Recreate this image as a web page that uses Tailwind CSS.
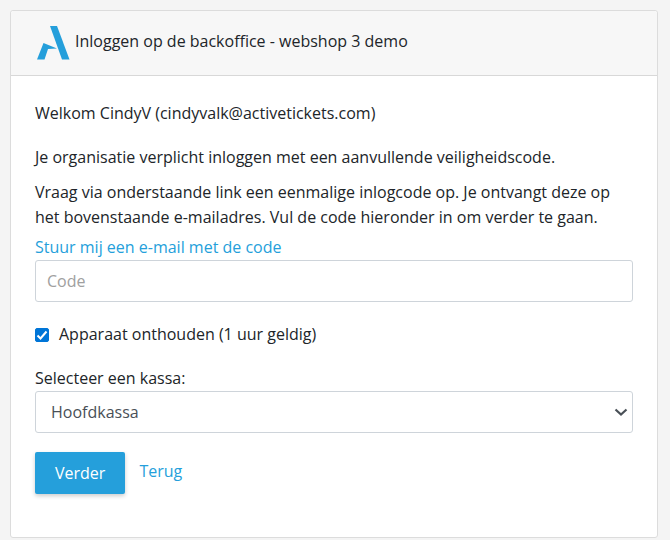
<!DOCTYPE html>
<html lang="nl">
<head>
    <meta charset="UTF-8">
    <meta name="viewport" content="width=device-width, initial-scale=1.0">
    <title>Inloggen op de backoffice</title>
    <script src="https://cdn.jsdelivr.net/npm/@tailwindcss/browser@4"></script>
</head>
<body class="bg-[#f4f4f4] pt-[10px] pl-[10px] pr-3 font-['Open_Sans','Noto_Sans',sans-serif] text-[16px] leading-[25px] text-[#212529]">

    <main class="bg-white border border-[#dcdcdc] rounded-[3px]">

        <!-- Header -->
        <header class="flex items-center gap-1 h-[65px] px-6 pb-[3px] bg-[#f7f7f7] border-b border-[#d8d8d8] rounded-t-[3px]">
            <svg class="w-9 h-9 shrink-0" viewBox="0 0 36 36" fill="#259fdb" aria-hidden="true">
                <path d="M15 2h7l12.500 33.500h-7.500z"/>
                <path d="M8.500 19L22 24.500l-9 .5-3.500 10.500H2z"/>
            </svg>
            <h1>Inloggen op de backoffice - webshop 3 demo</h1>
        </header>

        <!-- Login form -->
        <form class="px-6 pt-[25px] pb-[43px]">
            <p class="mb-[19px]">Welkom CindyV (cindyvalk@activetickets.com)</p>
            <p class="mb-[10px]">Je organisatie verplicht inloggen met een aanvullende veiligheidscode.</p>
            <p class="mb-[5px]">Vraag via onderstaande link een eenmalige inlogcode op. Je ontvangt deze op het bovenstaande e-mailadres. Vul de code hieronder in om verder te gaan.</p>
            <a href="#" class="block w-fit text-[#259fdb]">Stuur mij een e-mail met de code</a>
            <input type="text" placeholder="Code" aria-label="Code" class="block w-full h-[42px] px-[11px] border border-[#ced4da] rounded-[3px] placeholder:text-[#a0a0a0] outline-none">

            <div class="flex items-center gap-[10px] mt-5 mb-[19px]">
                <input type="checkbox" id="remember" checked class="peer appearance-none size-[14px] rounded-[2px] border border-[#0075d7] checked:bg-[#0075d7] bg-white">
                <svg class="hidden peer-checked:block pointer-events-none size-[14px] -ml-6" viewBox="0 0 14 14" fill="none" stroke="#fff" stroke-width="2" aria-hidden="true">
                    <path d="M2.500 7.500l3 3L11.500 3.500"/>
                </svg>
                <label for="remember">Apparaat onthouden (1 uur geldig)</label>
            </div>

            <label for="kassa" class="block">Selecteer een kassa:</label>
            <div class="relative mb-[19px]">
                <select id="kassa" class="appearance-none block w-full h-[42px] px-[15px] border border-[#ced4da] rounded-[3px] bg-white text-[#495057] outline-none">
                    <option>Hoofdkassa</option>
                </select>
                <svg class="absolute right-[5px] top-[15px] w-[14px] h-3 pointer-events-none" viewBox="0 0 14 12" fill="none" stroke="#495057" stroke-width="2.200" aria-hidden="true">
                    <path d="M1.500 3.500L7 8.500l5.500-5"/>
                </svg>
            </div>

            <div class="flex items-start gap-[14px]">
                <button type="submit" class="h-[42px] px-5 rounded-[2px] bg-[#259fdb] text-white shadow-[0_2px_4px_rgba(0,0,0,0.2)]">Verder</button>
                <a href="#" class="pt-[7px] text-[#259fdb]">Terug</a>
            </div>
        </form>
    </main>

</body>
</html>
